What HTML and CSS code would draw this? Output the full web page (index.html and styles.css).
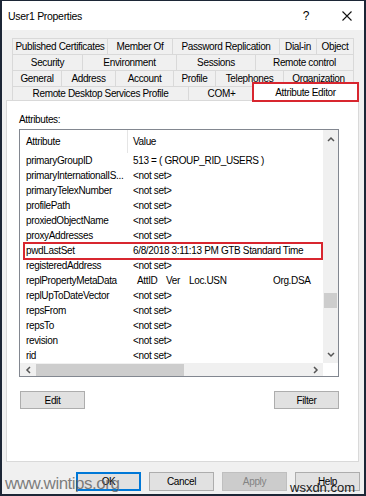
FILE: index.html
```html
<!DOCTYPE html>
<html lang="en">
<head>
    <meta charset="UTF-8">
    <title>User1 Properties</title>
    <link rel="stylesheet" href="styles.css">
</head>
<body>
    <div class="window">
        <div class="titlebar">
            <span class="title">User1 Properties</span>
            <span class="help">?</span>
            <span class="close">
                <svg width="10" height="10" viewBox="0 0 10 10"><path d="M0.5 0.5L9.5 9.5M9.5 0.5L0.5 9.5" stroke="#111" stroke-width="1.1" fill="none"/></svg>
            </span>
        </div>
        <div class="client">
            <div class="tabs">
                <div class="tab-row row-a">
                    <div class="tab">Published Certificates</div>
                    <div class="tab">Member Of</div>
                    <div class="tab">Password Replication</div>
                    <div class="tab">Dial-in</div>
                    <div class="tab">Object</div>
                </div>
                <div class="tab-row row-b">
                    <div class="tab">Security</div>
                    <div class="tab">Environment</div>
                    <div class="tab">Sessions</div>
                    <div class="tab">Remote control</div>
                </div>
                <div class="tab-row row-c">
                    <div class="tab">General</div>
                    <div class="tab">Address</div>
                    <div class="tab">Account</div>
                    <div class="tab">Profile</div>
                    <div class="tab">Telephones</div>
                    <div class="tab">Organization</div>
                </div>
                <div class="tab-row row-d">
                    <div class="tab">Remote Desktop Services Profile</div>
                    <div class="tab">COM+</div>
                    <div class="tab selected">Attribute Editor</div>
                </div>
            </div>

            <div class="panel">
                <div class="label">Attributes:</div>
                <div class="listbox">
                    <div class="list-view">
                        <div class="list-header">
                            <span class="attr">Attribute</span>
                            <span class="val">Value</span>
                        </div>
                        <div class="row"><span class="attr">primaryGroupID</span><span class="val">513 = ( GROUP_RID_USERS )</span></div>
                        <div class="row"><span class="attr">primaryInternationalIS...</span><span class="val">&lt;not set&gt;</span></div>
                        <div class="row"><span class="attr">primaryTelexNumber</span><span class="val">&lt;not set&gt;</span></div>
                        <div class="row"><span class="attr">profilePath</span><span class="val">&lt;not set&gt;</span></div>
                        <div class="row"><span class="attr">proxiedObjectName</span><span class="val">&lt;not set&gt;</span></div>
                        <div class="row"><span class="attr">proxyAddresses</span><span class="val">&lt;not set&gt;</span></div>
                        <div class="row marked"><span class="attr">pwdLastSet</span><span class="val">6/8/2018 3:11:13 PM GTB Standard Time</span></div>
                        <div class="row"><span class="attr">registeredAddress</span><span class="val">&lt;not set&gt;</span></div>
                        <div class="row"><span class="attr">replPropertyMetaData</span>
                            <span class="val meta"><span class="m-id">AttID</span><span class="m-ver">Ver</span><span class="m-usn">Loc.USN</span><span>Org.DSA</span></span>
                        </div>
                        <div class="row"><span class="attr">replUpToDateVector</span><span class="val">&lt;not set&gt;</span></div>
                        <div class="row"><span class="attr">repsFrom</span><span class="val">&lt;not set&gt;</span></div>
                        <div class="row"><span class="attr">repsTo</span><span class="val">&lt;not set&gt;</span></div>
                        <div class="row"><span class="attr">revision</span><span class="val">&lt;not set&gt;</span></div>
                        <div class="row"><span class="attr">rid</span><span class="val">&lt;not set&gt;</span></div>
                    </div>
                    <div class="vscroll">
                        <div class="sb-btn">
                            <svg width="8" height="6" viewBox="0 0 8 6"><polyline points="1,5 4,2 7,5" stroke="#555" stroke-width="1.5" fill="none"/></svg>
                        </div>
                        <div class="sb-track"><div class="vthumb"></div></div>
                        <div class="sb-btn">
                            <svg width="8" height="6" viewBox="0 0 8 6"><polyline points="1,1 4,4 7,1" stroke="#555" stroke-width="1.5" fill="none"/></svg>
                        </div>
                    </div>
                    <div class="hscroll">
                        <div class="sb-btn-h">
                            <svg width="6" height="8" viewBox="0 0 6 8"><polyline points="5,1 2,4 5,7" stroke="#555" stroke-width="1.5" fill="none"/></svg>
                        </div>
                        <div class="sb-track-h"><div class="hthumb"></div></div>
                        <div class="sb-btn-h">
                            <svg width="6" height="8" viewBox="0 0 6 8"><polyline points="1,1 4,4 1,7" stroke="#555" stroke-width="1.5" fill="none"/></svg>
                        </div>
                    </div>
                    <div class="corner"></div>
                </div>
                <div class="panel-buttons">
                    <button class="btn">Edit</button>
                    <button class="btn">Filter</button>
                </div>
            </div>

            <div class="dialog-buttons">
                <button class="btn default">OK</button>
                <button class="btn">Cancel</button>
                <button class="btn disabled">Apply</button>
                <button class="btn">Help</button>
            </div>
        </div>

        <div class="wm-left">www.wintips.org</div>
        <div class="wm-right">wsxdn.com</div>
    </div>
</body>
</html>
```

FILE: styles.css
```css
* {
    box-sizing: border-box;
    margin: 0;
    padding: 0;
}
body {
    font-family: 'Liberation Sans', Arial, sans-serif;
    font-size: 10px;
    letter-spacing: -0.35px;
    color: #000;
    background-color: #ffffff;
}
.window {
    position: relative;
    width: 366px;
    height: 496px;
    border: 2px solid #1c2636;
    border-top-width: 1px;
    background-color: #f0f0f0;
    display: flex;
    flex-direction: column;
    overflow: hidden;
}
.titlebar {
    height: 29px;
    background-color: #ffffff;
    display: flex;
    align-items: center;
    padding-left: 6px;
}
.title {
    flex: 1;
    font-size: 10.5px;
    letter-spacing: -0.3px;
}
.help {
    width: 20px;
    text-align: center;
    font-size: 12px;
    margin-right: 21px;
}
.close {
    width: 20px;
    margin-right: 7px;
    display: flex;
    justify-content: center;
}
.client {
    flex: 1;
    display: flex;
    flex-direction: column;
    padding-top: 8px;
}

/* tabs */
.tabs {
    margin: 0 10px;
}
.tab-row {
    display: grid;
    height: 16px;
}
.row-a {
    grid-template-columns: 95px 65px 107px 37px 1fr;
}
.row-b {
    grid-template-columns: 70px 94px 79px 1fr;
}
.row-c {
    grid-template-columns: 49px 54px 58px 42px 68px 1fr;
}
.row-d {
    grid-template-columns: 176px 66px 1fr;
    height: 14px;
}
.tab {
    border-left: 1px solid #d9d9d9;
    border-top: 1px solid #d9d9d9;
    display: flex;
    align-items: center;
    justify-content: center;
    white-space: nowrap;
}
.tab:last-child {
    border-right: 1px solid #d9d9d9;
}
.tab.selected {
    position: relative;
    z-index: 1;
    margin: -4px -5px -2px -2px;
    background-color: #ffffff;
    border: 2px solid #d8262f;
}

/* page */
.panel {
    margin: 0 5px 0 4px;
    height: 362px;
    background-color: #ffffff;
    border: 1px solid #d9d9d9;
    padding: 13px 0 0 12px;
}
.label {
    line-height: 12px;
    margin-bottom: 3px;
}
.listbox {
    width: 320px;
    height: 248px;
    border: 1px solid #828790;
    display: grid;
    grid-template-columns: 1fr 15px;
    grid-template-rows: 1fr 13px;
}
.list-view {
    background-color: #ffffff;
}
.list-header {
    height: 23px;
    display: grid;
    grid-template-columns: 108px 1fr;
}
.list-header span {
    display: flex;
    align-items: center;
}
.list-header .attr {
    border-right: 1px solid #e5e5e5;
}
.attr {
    padding-left: 6px;
    white-space: nowrap;
}
.val {
    padding-left: 5px;
    white-space: nowrap;
}
.row {
    position: relative;
    height: 15px;
    display: grid;
    grid-template-columns: 108px 1fr;
    align-items: center;
}
.row.marked::after {
    content: "";
    position: absolute;
    left: 3px;
    right: 0;
    top: -1px;
    bottom: -2px;
    border: 2px solid #d8262f;
}
.meta {
    display: flex;
    padding-left: 9px;
}
.m-id {
    width: 29px;
}
.m-ver {
    width: 23px;
}
.m-usn {
    width: 84px;
}

/* scrollbars */
.vscroll {
    background-color: #f0f0f0;
    display: flex;
    flex-direction: column;
}
.sb-btn {
    height: 17px;
    display: flex;
    align-items: center;
    justify-content: center;
}
.sb-track {
    flex: 1;
}
.vthumb {
    margin: 146px 1px 0 1px;
    height: 15px;
    background-color: #cdcdcd;
}
.hscroll {
    background-color: #f0f0f0;
    display: flex;
}
.sb-btn-h {
    width: 15px;
    display: flex;
    align-items: center;
    justify-content: center;
}
.sb-track-h {
    flex: 1;
    padding: 1px 0 0 1px;
}
.hthumb {
    width: 148px;
    height: 12px;
    background-color: #cdcdcd;
}
.corner {
    background-color: #ffffff;
}

/* buttons */
.btn {
    width: 65px;
    height: 18px;
    background-color: #e1e1e1;
    border: 1px solid #adadad;
    font-family: inherit;
    font-size: 10px;
    letter-spacing: inherit;
    color: #000;
}
.panel-buttons {
    width: 320px;
    margin-top: 14px;
    padding-left: 1px;
    display: flex;
    justify-content: space-between;
}
.dialog-buttons {
    margin-top: 10px;
    padding-right: 4px;
    display: flex;
    justify-content: flex-end;
    gap: 8px;
}
.dialog-buttons .btn {
    height: 19px;
}
.btn.default {
    border-color: #0078d7;
    box-shadow: inset 0 0 0 1px #0078d7;
}
.btn.disabled {
    background-color: #cccccc;
    border-color: #bfbfbf;
    color: #838383;
}

/* watermarks */
.wm-left {
    position: absolute;
    left: 3px;
    top: 473px;
    font-size: 17px;
    letter-spacing: -0.5px;
    color: rgba(95, 95, 95, 0.8);
}
.wm-right {
    position: absolute;
    left: 288px;
    top: 479px;
    font-size: 13px;
    letter-spacing: 0;
    color: #1a1a1a;
}
```
